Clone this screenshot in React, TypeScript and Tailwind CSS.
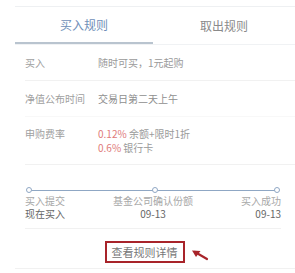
export default function App() {
  return (
    <div
      className="w-[295px] h-[273px] bg-white overflow-hidden"
      style={{ fontFamily: '"Noto Sans CJK SC", "Noto Sans", sans-serif' }}
    >
      {/* top hairline */}
      <div className="mt-[6px] ml-[15px] border-t border-[#eef0f2]" />

      {/* Tabs */}
      <div className="ml-[15px] flex border-b border-[#f0f2f4]">
        <div className="w-[138px] h-[37px] flex items-center justify-center text-[12px] text-[#6f8fb8] border-b-2 border-[#b9c4cf] mb-[-1px]">
          买入规则
        </div>
        <div className="flex-1 h-[37px] flex items-center justify-center text-[12px] text-[#8a8a8a]">
          取出规则
        </div>
      </div>

      {/* Rows */}
      <div className="ml-[25px] text-[10px]">
        <div className="flex h-[36px] items-center border-b border-[#f1f1f1]">
          <span className="w-[73px] text-[#a0a0a0]">买入</span>
          <span className="text-[#9a9a9a]">随时可买，1元起购</span>
        </div>
        <div className="flex h-[36px] items-center border-b border-[#f8f8f8]">
          <span className="w-[73px] text-[#a0a0a0]">净值公布时间</span>
          <span className="text-[#8f8f8f]">交易日第二天上午</span>
        </div>
        <div className="flex pt-[10px] pb-[9px] leading-[14px] border-b border-[#f1f1f1]">
          <span className="w-[73px] text-[#a0a0a0]">申购费率</span>
          <div className="flex flex-col">
            <span className="text-[#9a9a9a]">
              <span className="text-[#e07a7a]">0.12%</span> 余额+限时1折
            </span>
            <span className="text-[#9a9a9a]">
              <span className="text-[#e07a7a]">0.6%</span> 银行卡
            </span>
          </div>
        </div>
      </div>

      {/* Timeline */}
      <div className="ml-[25px] mr-[14px] pt-[22px] pb-[8px] border-b border-[#f1f1f1]">
        <div className="relative h-[6px] mx-[1px]">
          <div className="absolute left-[3px] right-[3px] top-[2.5px] border-t border-[#8fa7c4]" />
          <div className="absolute left-[0px] top-0 w-[6px] h-[6px] rounded-full border border-[#8fa7c4] bg-white" />
          <div className="absolute left-[126px] top-0 w-[6px] h-[6px] rounded-full border border-[#8fa7c4] bg-white" />
          <div className="absolute right-[0px] top-0 w-[6px] h-[6px] rounded-full border border-[#8fa7c4] bg-white" />
        </div>
        <div className="flex justify-between text-[10px] leading-[13px] mt-[1px]">
          <div className="flex flex-col">
            <span className="text-[#a8a8a8]">买入提交</span>
            <span className="text-[#666]">现在买入</span>
          </div>
          <div className="flex flex-col items-center">
            <span className="text-[#a8a8a8]">基金公司确认份额</span>
            <span className="text-[#666]">09-13</span>
          </div>
          <div className="flex flex-col items-end">
            <span className="text-[#a8a8a8]">买入成功</span>
            <span className="text-[#666]">09-13</span>
          </div>
        </div>
      </div>

      {/* Details button */}
      <div className="ml-[15px] flex items-center justify-center pt-[12px] pb-[5px] border-b border-[#f1f1f1]">
        <div className="ml-[3px] w-[80px] h-[22px] border-2 border-[#a8242a] flex items-center justify-center text-[11px] text-[#777]">
          查看规则详情
        </div>
        <svg width="18" height="12" viewBox="0 0 18 12" className="ml-[6px] mt-[5px]">
          <path d="M16 10 L4 3" stroke="#a8242a" strokeWidth="2.2" strokeLinecap="round" />
          <path d="M1 1.5 L9.5 2 L5 8 Z" fill="#a8242a" />
        </svg>
      </div>
    </div>
  );
}
